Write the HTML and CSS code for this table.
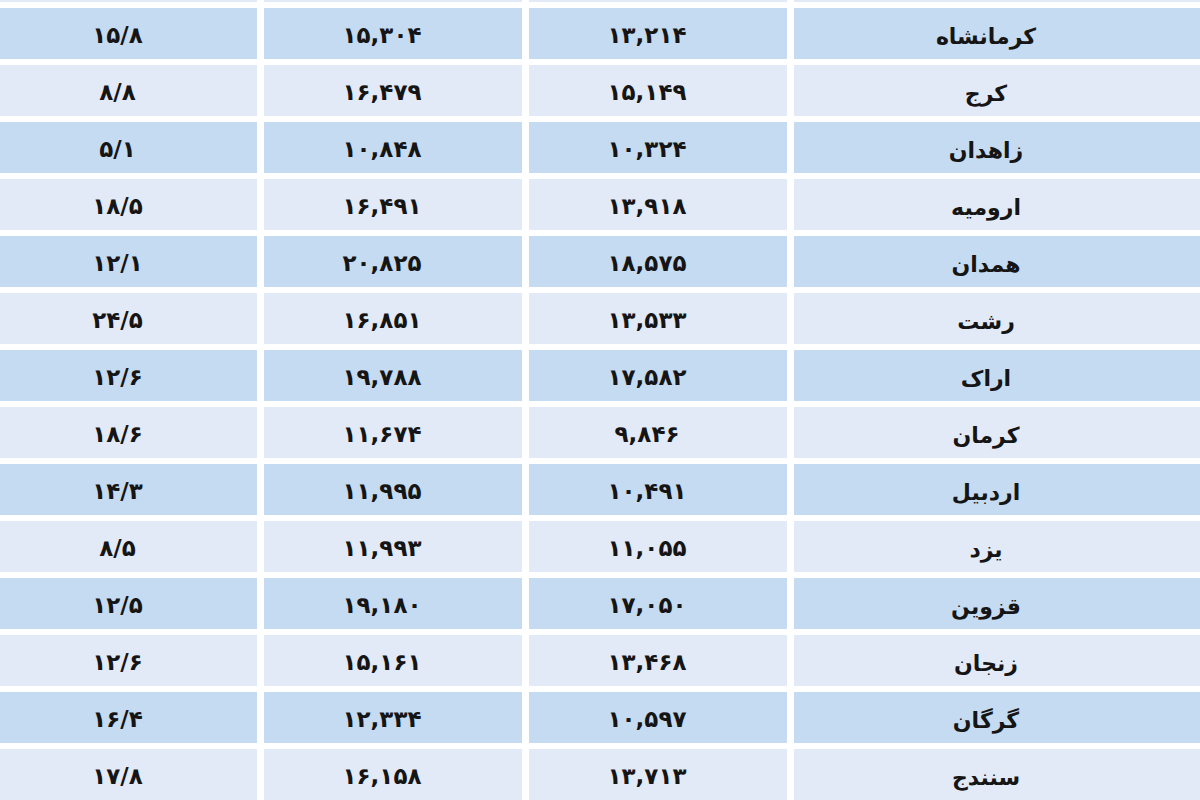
FILE: index.html
```html
<!DOCTYPE html>
<html lang="fa">
<head>
<meta charset="utf-8">
<title>جدول</title>
<link rel="stylesheet" href="styles.css">
</head>
<body>
<div class="table" dir="rtl">
  <div class="cell light edge"></div><div class="cell light edge"></div><div class="cell light edge"></div><div class="cell light edge"></div>

  <div class="cell dark">کرمانشاه</div><div class="cell dark num">۱۳,۲۱۴</div><div class="cell dark num">۱۵,۳۰۴</div><div class="cell dark num">۱۵/۸</div>
  <div class="cell light">کرج</div><div class="cell light num">۱۵,۱۴۹</div><div class="cell light num">۱۶,۴۷۹</div><div class="cell light num">۸/۸</div>
  <div class="cell dark">زاهدان</div><div class="cell dark num">۱۰,۳۲۴</div><div class="cell dark num">۱۰,۸۴۸</div><div class="cell dark num">۵/۱</div>
  <div class="cell light">ارومیه</div><div class="cell light num">۱۳,۹۱۸</div><div class="cell light num">۱۶,۴۹۱</div><div class="cell light num">۱۸/۵</div>
  <div class="cell dark">همدان</div><div class="cell dark num">۱۸,۵۷۵</div><div class="cell dark num">۲۰,۸۲۵</div><div class="cell dark num">۱۲/۱</div>
  <div class="cell light">رشت</div><div class="cell light num">۱۳,۵۳۳</div><div class="cell light num">۱۶,۸۵۱</div><div class="cell light num">۲۴/۵</div>
  <div class="cell dark">اراک</div><div class="cell dark num">۱۷,۵۸۲</div><div class="cell dark num">۱۹,۷۸۸</div><div class="cell dark num">۱۲/۶</div>
  <div class="cell light">کرمان</div><div class="cell light num">۹,۸۴۶</div><div class="cell light num">۱۱,۶۷۴</div><div class="cell light num">۱۸/۶</div>
  <div class="cell dark">اردبیل</div><div class="cell dark num">۱۰,۴۹۱</div><div class="cell dark num">۱۱,۹۹۵</div><div class="cell dark num">۱۴/۳</div>
  <div class="cell light">یزد</div><div class="cell light num">۱۱,۰۵۵</div><div class="cell light num">۱۱,۹۹۳</div><div class="cell light num">۸/۵</div>
  <div class="cell dark">قزوین</div><div class="cell dark num">۱۷,۰۵۰</div><div class="cell dark num">۱۹,۱۸۰</div><div class="cell dark num">۱۲/۵</div>
  <div class="cell light">زنجان</div><div class="cell light num">۱۳,۴۶۸</div><div class="cell light num">۱۵,۱۶۱</div><div class="cell light num">۱۲/۶</div>
  <div class="cell dark">گرگان</div><div class="cell dark num">۱۰,۵۹۷</div><div class="cell dark num">۱۲,۳۳۴</div><div class="cell dark num">۱۶/۴</div>
  <div class="cell light">سنندج</div><div class="cell light num">۱۳,۷۱۳</div><div class="cell light num">۱۶,۱۵۸</div><div class="cell light num">۱۷/۸</div>
</div>
</body>
</html>
```

FILE: styles.css
```css
html, body {
  margin: 0;
  padding: 0;
  background: #ffffff;
  overflow: hidden;
}

.table {
  width: 1200px;
  height: 800px;
  display: grid;
  grid-template-columns: 406px 258px 258px 257px;
  grid-template-rows: 2px repeat(14, 51px);
  column-gap: 7px;
  row-gap: 6px;
  font-family: "DejaVu Sans", sans-serif;
  font-weight: bold;
  font-size: 22px;
  color: #151515;
  overflow: hidden;
}

.cell {
  display: flex;
  align-items: center;
  justify-content: center;
  padding-top: 5px;
  padding-right: 22px;
  box-sizing: border-box;
}

.num {
  font-size: 23px;
  padding-top: 3px;
}

.dark {
  background: #c5dbf1;
}

.light {
  background: #e3eaf7;
}

.edge {
  padding: 0;
}
```
